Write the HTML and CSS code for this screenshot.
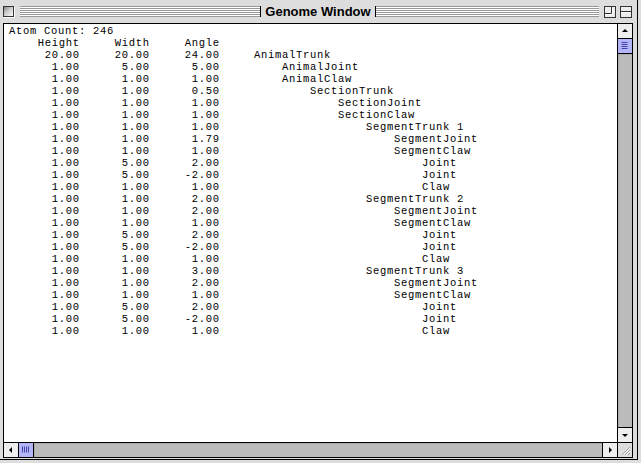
FILE: index.html
```html
<!DOCTYPE html>
<html>
<head>
<meta charset="utf-8">
<title>Genome Window</title>
<link rel="stylesheet" href="styles.css">
</head>
<body>
<div class="window">
  <div class="titlebar">
    <div class="tside">
      <span class="closebox"></span>
      <span class="stripes left"></span>
    </div>
    <span class="title">Genome Window</span>
    <div class="tside">
      <span class="stripes right"></span>
      <span class="wbox">
        <svg width="12" height="12" viewBox="0 0 12 12"><rect x="0.5" y="0.5" width="11" height="11" fill="#eee" stroke="#333"/><path d="M0.5 7.5H7.5V0.5" fill="none" stroke="#333"/><path d="M8.5 1.5V8.5H1.5" fill="none" stroke="#fff"/></svg>
      </span>
      <span class="wbox last">
        <svg width="12" height="12" viewBox="0 0 12 12"><rect x="0.5" y="0.5" width="11" height="11" fill="#eee" stroke="#333"/><path d="M0.5 5.5H11.5" stroke="#333"/><path d="M1 6.5H11" stroke="#fff"/></svg>
      </span>
    </div>
  </div>
  <div class="frame">
    <div class="content">
      <div class="row head"><span class="full">Atom Count: 246</span></div>
      <div class="row"><span class="num">Height</span><span class="num">Width</span><span class="num">Angle</span><span></span></div>
      <div class="row"><span class="num">20.00</span><span class="num">20.00</span><span class="num">24.00</span><span class="name l0">AnimalTrunk</span></div>
      <div class="row"><span class="num">1.00</span><span class="num">5.00</span><span class="num">5.00</span><span class="name l1">AnimalJoint</span></div>
      <div class="row"><span class="num">1.00</span><span class="num">1.00</span><span class="num">1.00</span><span class="name l1">AnimalClaw</span></div>
      <div class="row"><span class="num">1.00</span><span class="num">1.00</span><span class="num">0.50</span><span class="name l2">SectionTrunk</span></div>
      <div class="row"><span class="num">1.00</span><span class="num">1.00</span><span class="num">1.00</span><span class="name l3">SectionJoint</span></div>
      <div class="row"><span class="num">1.00</span><span class="num">1.00</span><span class="num">1.00</span><span class="name l3">SectionClaw</span></div>
      <div class="row"><span class="num">1.00</span><span class="num">1.00</span><span class="num">1.00</span><span class="name l4">SegmentTrunk 1</span></div>
      <div class="row"><span class="num">1.00</span><span class="num">1.00</span><span class="num">1.79</span><span class="name l5">SegmentJoint</span></div>
      <div class="row"><span class="num">1.00</span><span class="num">1.00</span><span class="num">1.00</span><span class="name l5">SegmentClaw</span></div>
      <div class="row"><span class="num">1.00</span><span class="num">5.00</span><span class="num">2.00</span><span class="name l6">Joint</span></div>
      <div class="row"><span class="num">1.00</span><span class="num">5.00</span><span class="num">-2.00</span><span class="name l6">Joint</span></div>
      <div class="row"><span class="num">1.00</span><span class="num">1.00</span><span class="num">1.00</span><span class="name l6">Claw</span></div>
      <div class="row"><span class="num">1.00</span><span class="num">1.00</span><span class="num">2.00</span><span class="name l4">SegmentTrunk 2</span></div>
      <div class="row"><span class="num">1.00</span><span class="num">1.00</span><span class="num">2.00</span><span class="name l5">SegmentJoint</span></div>
      <div class="row"><span class="num">1.00</span><span class="num">1.00</span><span class="num">1.00</span><span class="name l5">SegmentClaw</span></div>
      <div class="row"><span class="num">1.00</span><span class="num">5.00</span><span class="num">2.00</span><span class="name l6">Joint</span></div>
      <div class="row"><span class="num">1.00</span><span class="num">5.00</span><span class="num">-2.00</span><span class="name l6">Joint</span></div>
      <div class="row"><span class="num">1.00</span><span class="num">1.00</span><span class="num">1.00</span><span class="name l6">Claw</span></div>
      <div class="row"><span class="num">1.00</span><span class="num">1.00</span><span class="num">3.00</span><span class="name l4">SegmentTrunk 3</span></div>
      <div class="row"><span class="num">1.00</span><span class="num">1.00</span><span class="num">2.00</span><span class="name l5">SegmentJoint</span></div>
      <div class="row"><span class="num">1.00</span><span class="num">1.00</span><span class="num">1.00</span><span class="name l5">SegmentClaw</span></div>
      <div class="row"><span class="num">1.00</span><span class="num">5.00</span><span class="num">2.00</span><span class="name l6">Joint</span></div>
      <div class="row"><span class="num">1.00</span><span class="num">5.00</span><span class="num">-2.00</span><span class="name l6">Joint</span></div>
      <div class="row"><span class="num">1.00</span><span class="num">1.00</span><span class="num">1.00</span><span class="name l6">Claw</span></div>
    </div>
    <div class="vscroll">
      <div class="arrow up"><svg width="14" height="14" viewBox="0 0 14 14"><path d="M7 5L10 8H4Z" fill="#000"/></svg></div>
      <div class="thumb v"><svg width="13" height="13" viewBox="0 0 13 13"><path d="M3.5 3.5H9.5M3.5 5.5H9.5M3.5 7.5H9.5M3.5 9.5H9.5" stroke="#4444aa"/></svg></div>
      <div class="track"></div>
      <div class="arrow down"><svg width="14" height="14" viewBox="0 0 14 14"><path d="M7 9L10 6H4Z" fill="#000"/></svg></div>
    </div>
    <div class="hscroll">
      <div class="arrow left"><svg width="14" height="14" viewBox="0 0 14 14"><path d="M5 7L8 4V10Z" fill="#000"/></svg></div>
      <div class="thumb h"><svg width="13" height="13" viewBox="0 0 13 13"><path d="M3.5 3.5V9.5M5.5 3.5V9.5M7.5 3.5V9.5M9.5 3.5V9.5" stroke="#4444aa"/></svg></div>
      <div class="track"></div>
      <div class="arrow right"><svg width="14" height="14" viewBox="0 0 14 14"><path d="M9 7L6 4V10Z" fill="#000"/></svg></div>
    </div>
    <div class="grow"><svg width="14" height="14" viewBox="0 0 14 14"><path d="M4 12L12 4M7 12L12 7M10 12L12 10" stroke="#999"/><path d="M5 12L12 5M8 12L12 8" stroke="#fff"/></svg></div>
  </div>
</div>
</body>
</html>
```
FILE: styles.css
```css
* { box-sizing: border-box; }
html, body { margin: 0; padding: 0; }
body {
  width: 641px;
  height: 463px;
  background: #dddddd;
  overflow: hidden;
  font-family: "Liberation Sans", Arial, sans-serif;
}
.window {
  width: 638px;
  height: 460px;
  background: #dddddd;
  border-right: 1px solid #000;
  border-bottom: 1px solid #000;
  padding: 0 4px 0 3px;
  display: flex;
  flex-direction: column;
}
.titlebar {
  height: 23px;
  display: grid;
  grid-template-columns: 1fr auto 1fr;
  align-items: center;
  flex: none;
}
.tside {
  display: flex;
  align-items: center;
}
.closebox {
  width: 11px;
  height: 11px;
  border: 1px solid #333;
  background: linear-gradient(135deg, #888 0%, #ccc 45%, #fff 100%);
  box-shadow: 1px 1px 0 #fff;
  flex: none;
}
.stripes {
  flex: 1;
  height: 11px;
  background: repeating-linear-gradient(to bottom, #999 0, #999 1px, #fff 1px, #fff 2px);
}
.stripes.left { margin: 0 4px 0 6px; }
.stripes.right { margin: 0 5px 0 4px; }
.title {
  font-weight: bold;
  font-size: 13px;
  color: #000;
  line-height: 16px;
}
.wbox {
  width: 12px;
  height: 12px;
  display: flex;
  flex: none;
  margin-right: 4px;
}
.wbox.last { margin-right: 1px; }
.frame {
  width: 630px;
  height: 435px;
  border: 1px solid #000;
  display: grid;
  grid-template-columns: 1fr 15px;
  grid-template-rows: 1fr 15px;
  background: #fff;
}
.content {
  padding: 1px 0 0 5px;
  font-family: "Liberation Mono", "DejaVu Sans Mono", monospace;
  font-size: 10.5px;
  letter-spacing: 0.7px;
  line-height: 12px;
  color: #000;
  overflow: hidden;
}
.row {
  display: grid;
  grid-template-columns: 70px 70px 70px 1fr;
  height: 12px;
  white-space: pre;
}
.row .full { grid-column: 1 / -1; }
.num { text-align: right; margin-right: -0.7px; }
.name { padding-left: 35px; }
.l1 { padding-left: 63px; }
.l2 { padding-left: 91px; }
.l3 { padding-left: 119px; }
.l4 { padding-left: 147px; }
.l5 { padding-left: 175px; }
.l6 { padding-left: 203px; }
.vscroll {
  border-left: 1px solid #000;
  display: flex;
  flex-direction: column;
  background: #bbbbbb;
}
.hscroll {
  border-top: 1px solid #000;
  display: flex;
  background: #bbbbbb;
}
.arrow {
  width: 14px;
  height: 14px;
  background: #eeeeee;
  display: flex;
  flex: none;
}
.up { border-bottom: 1px solid #000; height: 15px; }
.down { border-top: 1px solid #000; height: 15px; }
.left { border-right: 1px solid #000; width: 15px; }
.right { border-left: 1px solid #000; width: 15px; }
.thumb {
  flex: none;
  background: #b4b4f8;
  display: flex;
}
.thumb.v { width: 14px; height: 15px; border-bottom: 1px solid #000; }
.thumb.h { width: 15px; height: 14px; border-right: 1px solid #000; }
.track {
  flex: 1;
  background: #bbbbbb;
  box-shadow: inset 1px 1px 0 #aaa;
}
.grow {
  border-top: 1px solid #000;
  border-left: 1px solid #000;
  background: #dddddd;
  display: flex;
}
```
